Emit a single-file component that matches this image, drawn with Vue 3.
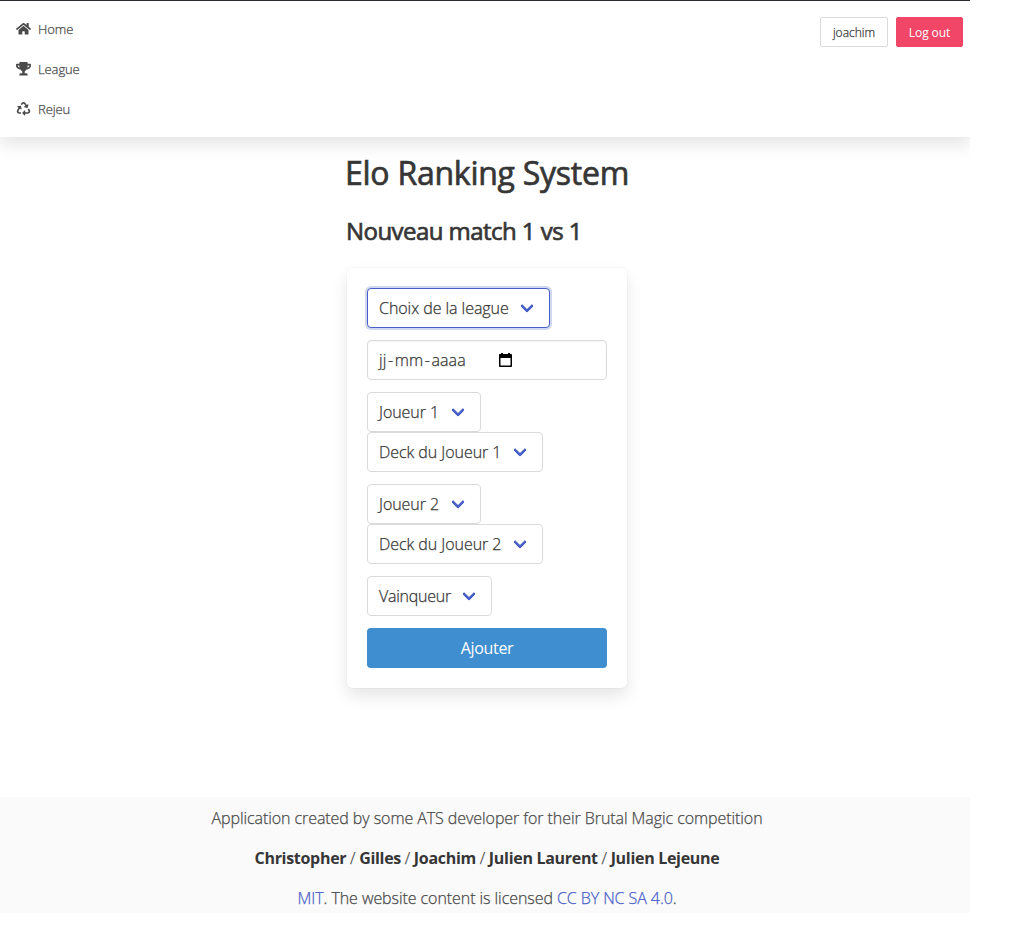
<script setup>
const navItems = [
  { label: 'Home', box: '0 0 576 512', path: 'M280.37 148.26L96 300.11V464a16 16 0 0 0 16 16l112.06-.29a16 16 0 0 0 15.92-16V368a16 16 0 0 1 16-16h64a16 16 0 0 1 16 16v95.64a16 16 0 0 0 16 16.05L464 480a16 16 0 0 0 16-16V300L295.67 148.26a12.19 12.19 0 0 0-15.3 0zM571.6 251.47L488 182.56V44.05a12 12 0 0 0-12-12h-56a12 12 0 0 0-12 12v72.61L318.47 43a48 48 0 0 0-61 0L4.34 251.47a12 12 0 0 0-1.6 16.9l25.5 31A12 12 0 0 0 45.15 301l235.22-193.74a12.19 12.19 0 0 1 15.3 0L530.9 301a12 12 0 0 0 16.9-1.6l25.5-31a12 12 0 0 0-1.7-16.93z' },
  { label: 'League', box: '0 0 576 512', path: 'M552 64H448V24c0-13.3-10.7-24-24-24H152c-13.3 0-24 10.7-24 24v40H24C10.7 64 0 74.7 0 88v56c0 35.7 22.5 72.4 61.9 100.7 31.5 22.7 69.8 37.1 110 41.7C203.3 338.5 240 360 240 360v72h-48c-35.3 0-64 20.7-64 56v12c0 6.6 5.4 12 12 12h296c6.6 0 12-5.4 12-12v-12c0-35.3-28.7-56-64-56h-48v-72s36.7-21.5 68.1-73.6c40.3-4.6 78.6-19 110-41.7 39.3-28.3 61.9-65 61.9-100.7V88c0-13.3-10.7-24-24-24zM99.3 192.8C74.9 175.2 64 155.6 64 144v-16h64.2c1 32.6 5.8 61.2 12.8 86.2-15.1-5.2-29.2-12.4-41.7-21.4zM512 144c0 16.1-17.7 36.1-35.3 48.8-12.5 9-26.7 16.2-41.8 21.4 7-25 11.8-53.6 12.8-86.2H512v16z' },
  { label: 'Rejeu', box: '0 0 512 512', path: 'M184.561 261.903c3.232 13.997-12.123 24.635-24.068 17.168l-40.736-25.455-50.867 81.402C55.606 356.273 70.96 384 96.012 384H148c6.627 0 12 5.373 12 12v40c0 6.627-5.373 12-12 12H96.115c-75.334 0-121.302-83.048-81.408-146.88l50.822-81.388-40.725-25.448c-12.081-7.547-8.966-25.961 4.879-29.158l110.237-25.45c8.611-1.988 17.201 3.381 19.189 11.99l25.452 110.237zm98.561-182.915l41.289 66.076-40.74 25.457c-12.051 7.528-9 25.953 4.879 29.158l110.237 25.45c8.672 1.999 17.215-3.438 19.189-11.99l25.45-110.237c3.197-13.844-11.99-24.719-24.068-17.168l-40.687 25.424-41.263-66.082c-37.521-60.033-125.209-60.171-162.816 0l-17.963 28.766c-3.51 5.62-1.8 13.021 3.82 16.533l33.919 21.195c5.62 3.512 13.024 1.803 16.536-3.817l17.961-28.743c12.712-20.341 41.973-19.676 54.257-.022zM497.288 301.12l-27.515-44.065c-3.511-5.623-10.916-7.334-16.538-3.821l-33.861 21.159c-5.62 3.512-7.33 10.915-3.818 16.536l27.564 44.112c13.257 21.211-2.057 48.96-27.136 48.96H320V336.02c0-14.213-17.242-21.383-27.313-11.313l-80 79.981c-6.249 6.248-6.249 16.379 0 22.627l80 79.989C302.689 517.308 320 510.3 320 495.989V448h95.88c75.274 0 121.335-82.997 81.408-146.88z' },
]
</script>

<template>
  <div class="page">
    <header class="navbar">
      <nav>
        <a v-for="n in navItems" :key="n.label" class="nav-item">
          <svg class="nav-icon" :viewBox="n.box"><path :d="n.path" /></svg>
          <span>{{ n.label }}</span>
        </a>
      </nav>
      <div class="actions">
        <button class="small user">joachim</button>
        <button class="small logout">Log out</button>
      </div>
    </header>
    <main>
      <h1>Elo Ranking System</h1>
      <h2>Nouveau match 1 vs 1</h2>
      <form class="box" @submit.prevent>
        <div class="field">
          <div class="select w-league focused"><span>Choix de la league</span><i></i></div>
        </div>
        <div class="field date">
          <span>jj<b>-</b>mm<b>-</b>aaaa</span>
          <svg viewBox="0 0 13 14"><path fill-rule="evenodd" d="M2 0h2v1h5V0h2v1h1.200c.5 0 .8.4.8.8V13.200c0 .5-.3.8-.8.8H.8c-.5 0-.8-.3-.8-.8V1.800C0 1.400.3 1 .8 1H2zM1.500 5v7.500h10V5z" /></svg>
        </div>
        <div class="field">
          <div class="select w-player"><span>Joueur 1</span><i></i></div>
          <div class="select w-deck"><span>Deck du Joueur 1</span><i></i></div>
        </div>
        <div class="field">
          <div class="select w-player"><span>Joueur 2</span><i></i></div>
          <div class="select w-deck"><span>Deck du Joueur 2</span><i></i></div>
        </div>
        <div class="field">
          <div class="select w-winner"><span>Vainqueur</span><i></i></div>
        </div>
        <button class="submit">Ajouter</button>
      </form>
    </main>
    <footer>
      <p class="about">Application created by some ATS developer for their Brutal Magic competition</p>
      <p class="authors"><strong>Christopher</strong> / <strong>Gilles</strong> / <strong>Joachim</strong> / <strong>Julien Laurent</strong> / <strong>Julien Lejeune</strong></p>
      <p class="about"><a>MIT</a>. The website content is licensed <a>CC BY NC SA 4.0</a>.</p>
    </footer>
  </div>
</template>

<style>
body { background: #fff; }
</style>
<style scoped>
* { box-sizing: border-box; margin: 0; }
.page { width: 970px; height: 942px; overflow: hidden; font: 300 16px/24px "Open Sans", "Noto Sans", sans-serif; -webkit-text-stroke: 0.25px currentColor; color: #363636; display: flex; flex-direction: column; border-top: 1px solid #2b2a33; }
.navbar { height: 136px; flex: none; padding: 8px 7px 8px 8px; display: flex; justify-content: space-between; align-items: flex-start; box-shadow: 0 8px 16px rgba(10, 10, 10, .1); }
.nav-item { height: 40px; padding: 0 8px; display: flex; align-items: center; font-size: 13px; letter-spacing: -.1px; color: #4a4a4a; }
.nav-icon { width: 15px; height: 13.500px; margin-right: 7px; fill: #4a4a4a; -webkit-text-stroke: 0; }
.actions { display: flex; gap: 8px; padding-top: 8px; }
.small { height: 30px; border: 1px solid #dbdbdb; border-radius: 2px; background: #fff; color: #363636; font: 300 12px/18px "Open Sans", sans-serif; padding: 1px 0 0; }
.user { width: 68px; }
.logout { width: 67px; background: #f14668; border-color: #f14668; color: #fff; font-weight: 400; letter-spacing: -.1px; -webkit-text-stroke: 0; }
main { width: 280px; margin: 18px 0 0 347px; flex: none; }
h1, h2 { font-weight: 400; white-space: nowrap; -webkit-text-stroke: 0.7px currentColor; }
h1 { font-size: 32px; line-height: 36px; margin-left: -2px; letter-spacing: -.25px; }
h2 { font-size: 24px; line-height: 30px; margin: 25px 0 0 -1px; letter-spacing: -.55px; }
.box { margin-top: 22px; height: 420px; padding: 20px; border-radius: 6px; background: #fff; box-shadow: 0 8px 16px rgba(10, 10, 10, .1), 0 0 0 1px rgba(10, 10, 10, .02); }
.field { margin-bottom: 12px; }
.select, .date { height: 40px; border: 1px solid #dbdbdb; border-radius: 4px; padding: 0 11px; display: flex; align-items: center; position: relative; white-space: nowrap; background: #fff; letter-spacing: -.05px; }
.focused { border-color: #485fc7; box-shadow: 0 0 0 2px rgba(72, 95, 199, .25); }
.w-league { width: 183px; }
.w-player { width: 114px; }
.w-deck { width: 176px; }
.w-winner { width: 125px; letter-spacing: -.25px; }
.select i { position: absolute; right: 17px; top: 12px; width: 10px; height: 10px; border: 3px solid #485fc7; border-top: 0; border-right: 0; border-radius: 2px; transform: rotate(-45deg); }
.date { box-shadow: inset 0 1px 2px rgba(10, 10, 10, .05); letter-spacing: .1px; }
.date b { font-weight: inherit; margin: 0 1.500px; }
.date svg { width: 13px; height: 14px; position: absolute; left: 131px; top: 12px; fill: #000; -webkit-text-stroke: 0; }
.submit { width: 100%; height: 40px; border: 0; border-radius: 4px; background: #3e8ed0; color: #fff; font: 400 16px/24px "Open Sans", sans-serif; letter-spacing: -.3px; display: block; padding: 0; -webkit-text-stroke: 0; }
footer { margin-top: 109px; height: 116px; flex: none; background: #fafafa; color: #4a4a4a; text-align: center; padding: 9px 0 0 4px; white-space: nowrap; }
footer p { margin-bottom: 16px; }
.about { letter-spacing: -.07px; }
.authors { letter-spacing: -.3px; }
strong { color: #363636; font-weight: 700; -webkit-text-stroke: 0; }
a { color: #485fc7; }
</style>
